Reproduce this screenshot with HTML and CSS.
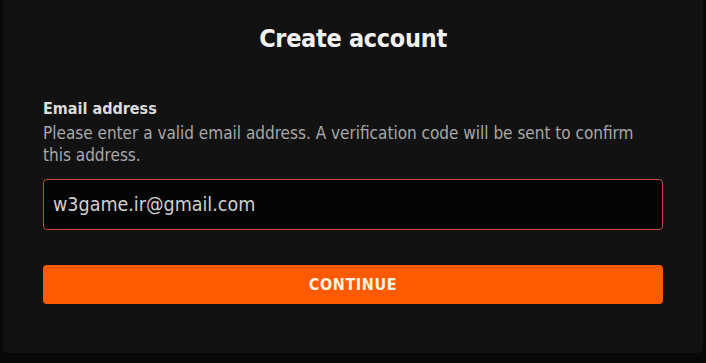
FILE: index.html
```html
<!DOCTYPE html>
<html>
<head>
<meta charset="utf-8">
<link rel="stylesheet" href="styles.css">
</head>
<body>
<div class="panel">
  <h1 class="title">Create account</h1>
  <form class="form">
    <div class="field">
      <label class="label" for="email">Email address</label>
      <p class="help">Please enter a valid email address. A verification code will be sent to confirm this address.</p>
    </div>
    <div class="input">w3game.ir@gmail.com</div>
    <button type="button" class="btn">CONTINUE</button>
  </form>
</div>
</body>
</html>
```

FILE: styles.css
```css
html, body {
  margin: 0;
  padding: 0;
  background: #080808;
  height: 100%;
}
body {
  font-family: "DejaVu Sans Condensed", "DejaVu Sans", sans-serif;
  color: #e6e6e6;
}
.panel {
  margin: 0 3px 0 3px;
  height: 353px;
  box-sizing: border-box;
  background: #121212;
  border-radius: 0 0 5px 5px;
  padding: 22px 40px 0 40px;
  display: flex;
  flex-direction: column;
}
.title {
  margin: 0;
  text-align: center;
  font-size: 25px;
  font-weight: 700;
  line-height: 34px;
  color: #f2f2f2;
  letter-spacing: -0.3px;
}
.form {
  display: flex;
  flex-direction: column;
  margin-top: 42px;
}
.field {
  display: flex;
  flex-direction: column;
}
.label {
  font-size: 16px;
  font-weight: 700;
  line-height: 22px;
  color: #dcdcdc;
}
.help {
  margin: 2px 0 0 0;
  font-size: 17px;
  line-height: 22px;
  color: #a8a8a8;
  letter-spacing: 0;
}
.input {
  margin-top: 13px;
  height: 51px;
  box-sizing: border-box;
  border: 1px solid #c24a30;
  border-radius: 4px;
  background: #050505;
  display: flex;
  align-items: center;
  padding: 0 9px;
  font-size: 19.5px;
  color: #d0d0d0;
}
.btn {
  margin-top: 35px;
  height: 39px;
  border: none;
  border-radius: 4px;
  background: #ff5a00;
  color: #fff3e3;
  font-family: inherit;
  font-size: 16px;
  font-weight: 700;
  letter-spacing: 0.6px;
  cursor: pointer;
}
```
